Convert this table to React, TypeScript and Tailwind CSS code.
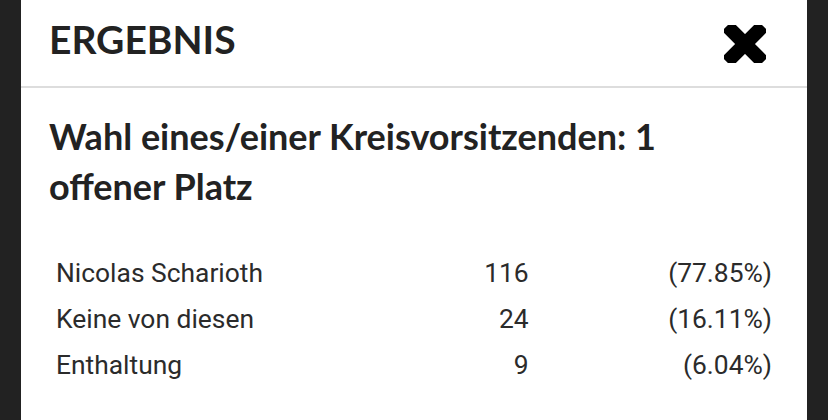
const rows = [
  { name: "Nicolas Scharioth", votes: 116, pct: "(77.85%)" },
  { name: "Keine von diesen", votes: 24, pct: "(16.11%)" },
  { name: "Enthaltung", votes: 9, pct: "(6.04%)" },
];

const CloseIcon = () => (
  <svg width="42" height="38" viewBox="0 0 42 38" aria-hidden="true">
    <g transform="translate(21 19)">
      <rect x="-25.5" y="-7" width="51" height="14" rx="3" transform="rotate(45)" fill="#000" />
      <rect x="-25.5" y="-7" width="51" height="14" rx="3" transform="rotate(-45)" fill="#000" />
    </g>
  </svg>
);

export default function App() {
  return (
    <div className="w-[828px] h-[420px] bg-[#222222] px-[21px] overflow-hidden">
      <div className="h-full bg-white">
        {/* header */}
        <div className="h-[88px] px-[28px] pt-[16px] border-b-2 border-[#dddddd] flex items-start justify-between">
          <h2 className="font-['Lato',sans-serif] font-bold text-[39px] leading-[1.2] text-[#222222]">
            ERGEBNIS
          </h2>
          <button className="mt-[9px] mr-[13px]">
            <CloseIcon />
          </button>
        </div>

        {/* body */}
        <div className="px-[28px] pt-[23px]">
          <h3 className="font-['Lato',sans-serif] font-bold text-[36px] leading-[50px] text-[#222222]">
            Wahl eines/einer Kreisvorsitzenden: 1
            <br />
            offener Platz
          </h3>

          <div className="mt-[39px] font-['Roboto',sans-serif] text-[26.4px] text-[#2b2b2b]">
            {rows.map((r) => (
              <div key={r.name} className="grid grid-cols-[3fr_1fr_2fr] h-[46px] leading-[46px]">
                <div className="px-[7px]">{r.name}</div>
                <div className="px-[7px] text-right">{r.votes}</div>
                <div className="px-[7px] text-right">{r.pct}</div>
              </div>
            ))}
          </div>
        </div>
      </div>
    </div>
  );
}
